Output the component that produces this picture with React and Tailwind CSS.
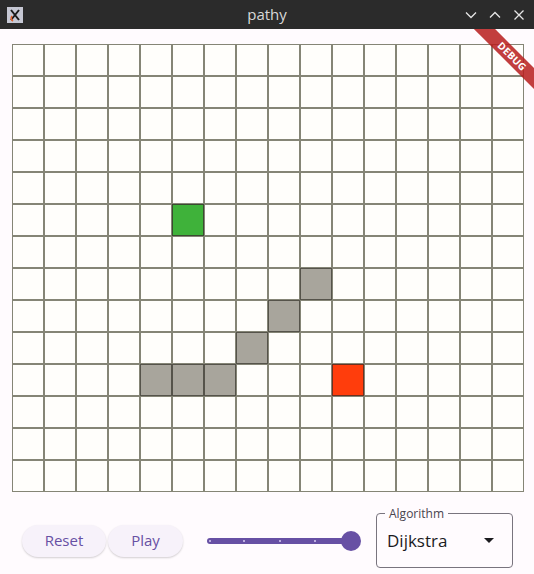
import React from 'react'

const COLS = 16
const ROWS = 14

const special = {
  '5-5': 'start',
  '10-10': 'end',
  '10-4': 'wall',
  '10-5': 'wall',
  '10-6': 'wall',
  '9-7': 'wall',
  '8-8': 'wall',
  '7-9': 'wall',
}

function Cell({ kind }) {
  let cls = 'border border-[#858576] bg-[#fffefb]'
  if (kind === 'start') cls = 'border border-[#3a4a30] bg-[#3fb23a]'
  if (kind === 'end') cls = 'border border-[#6a3020] bg-[#ff3d0c]'
  if (kind === 'wall') cls = 'border border-[#55534a] bg-[#a8a59c]'
  return <div className={cls} />
}

function TitleBar() {
  return (
    <div className="relative flex h-[29px] items-center bg-[#2b2b2b] px-[7px]">
      <svg width="16" height="16" viewBox="0 0 16 16">
        <rect x="0" y="0" width="16" height="16" fill="#c6c8d4" />
        <path d="M4 3 L12 13 M12 3 L4 13" stroke="#1a1a1a" strokeWidth="2" />
        <path d="M5 9 Q3 12 6 14" stroke="#e0602a" strokeWidth="1.6" fill="none" />
      </svg>
      <span className="absolute left-1/2 -translate-x-1/2 text-[15px] text-[#d8d8d8]">
        pathy
      </span>
      <div className="ml-auto flex items-center gap-[12px] pr-[2px]">
        <svg width="12" height="12" viewBox="0 0 12 12">
          <path d="M1 3.5 L6 8.5 L11 3.5" stroke="#e6e6e6" strokeWidth="1.3" fill="none" />
        </svg>
        <svg width="12" height="12" viewBox="0 0 12 12">
          <path d="M1 8.5 L6 3.5 L11 8.5" stroke="#e6e6e6" strokeWidth="1.3" fill="none" />
        </svg>
        <svg width="12" height="12" viewBox="0 0 12 12">
          <path d="M1.5 1.5 L10.5 10.5 M10.5 1.5 L1.5 10.5" stroke="#e6e6e6" strokeWidth="1.3" fill="none" />
        </svg>
      </div>
    </div>
  )
}

function Slider() {
  return (
    <div className="relative h-[20px] w-[154px]">
      <div className="absolute left-0 top-[7px] h-[6px] w-[146px] rounded-full bg-[#6750a4]" />
      {[2, 36, 72, 107].map(x => (
        <div key={x} className="absolute top-[9px] h-[2px] w-[2px] rounded-full bg-[#d8ccf4]" style={{ left: x }} />
      ))}
      <div className="absolute left-[134px] top-0 h-[20px] w-[20px] rounded-full bg-[#6750a4]" />
    </div>
  )
}

export default function App() {
  const cells = []
  for (let r = 0; r < ROWS; r++) {
    for (let c = 0; c < COLS; c++) {
      cells.push(<Cell key={`${r}-${c}`} kind={special[`${r}-${c}`]} />)
    }
  }

  return (
    <div className="h-[574px] w-[534px] overflow-hidden bg-[#fffbfe]" style={{ fontFamily: '"Open Sans", "Noto Sans", sans-serif' }}>
      <TitleBar />

      <div className="relative h-[545px] overflow-hidden">
        <div className="pl-[12px] pt-[15px]">
          <div className="grid h-[448px] w-[512px] grid-cols-16 grid-rows-14">
            {cells}
          </div>
        </div>

        <div className="mt-[21px] flex items-center pl-[22px]">
          <button className="h-[32px] w-[84px] rounded-full bg-[#f7f2fa] text-[15px] text-[#6750a4] shadow-[0_1px_2px_rgba(0,0,0,0.18)]">
            Reset
          </button>
          <button className="ml-[2px] h-[32px] w-[75px] rounded-full bg-[#f7f2fa] text-[15px] text-[#6750a4] shadow-[0_1px_2px_rgba(0,0,0,0.18)]">
            Play
          </button>
          <div className="ml-[24px]">
            <Slider />
          </div>
          <div className="relative ml-[15px] flex h-[55px] w-[137px] items-center rounded-[4px] border border-[#79747e] pl-[10px] pr-[18px]">
            <span className="absolute left-[8px] top-[-9px] bg-[#fffbfe] px-[4px] text-[12px] text-[#49454f]">Algorithm</span>
            <span className="text-[17px] text-[#1c1b1f]">Dijkstra</span>
            <svg className="ml-auto" width="10" height="5" viewBox="0 0 10 5">
              <path d="M0 0 L10 0 L5 5 Z" fill="#1c1b1f" />
            </svg>
          </div>
        </div>

        <div className="absolute right-[-38px] top-[20px] w-[120px] rotate-45 bg-[#b71c1c]/85 py-[1px] text-center text-[10px] font-bold leading-[13px] tracking-wide text-white">
          DEBUG
        </div>
      </div>
    </div>
  )
}
